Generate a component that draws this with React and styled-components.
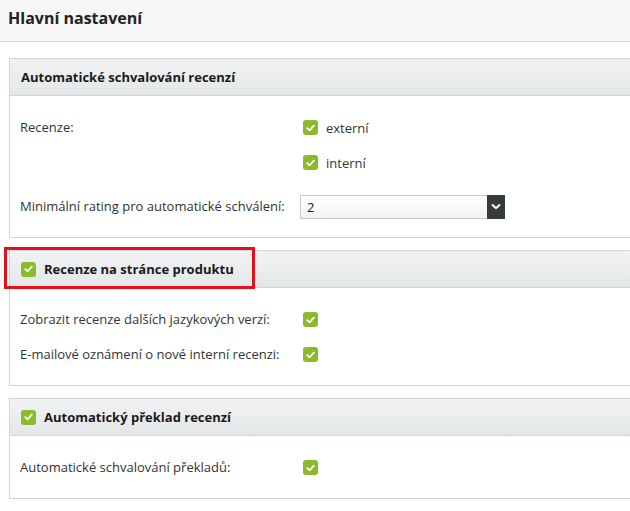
import React from "react";
import styled, { createGlobalStyle } from "styled-components";

const GlobalStyle = createGlobalStyle`
  html, body {
    margin: 0;
    padding: 0;
    background: #fff;
    font-family: "Open Sans", "Noto Sans", sans-serif;
    color: #333;
    overflow: hidden;
  }
`;

const Page = styled.div`
  width: 630px;
  height: 511px;
  overflow: hidden;
`;

const TitleBar = styled.div`
  height: 42px;
  display: flex;
  align-items: center;
  padding-left: 8px;
  background: #f6f6f6;
  border-bottom: 1px solid #d9d9d9;
  box-sizing: border-box;
  h1 {
    margin: 0;
    font-size: 16px;
    font-weight: 700;
    color: #222;
    margin-top: -5px;
  }
`;

const Content = styled.div`
  padding: 16px 0 0 9px;
  display: flex;
  flex-direction: column;
  gap: 12px;
`;

const Panel = styled.section`
  position: relative;
  border: 1px solid #d4d4d4;
  border-right: none;
  width: 640px;
`;

const PanelHeader = styled.div`
  height: 36px;
  display: flex;
  align-items: center;
  gap: 8px;
  padding-left: 11px;
  background: linear-gradient(#f1f2f3, #e4e7e8);
  border-bottom: 1px solid #d4d4d4;
  font-size: 13px;
  font-weight: 700;
  color: #1a1a1a;
`;

const PanelBody = styled.div`
  padding: 14px 11px 13px 10px;
  display: flex;
  flex-direction: column;
`;

const Row = styled.div`
  display: flex;
  align-items: ${(p) => (p.$top ? "flex-start" : "center")};
  min-height: 35px;
  margin-top: ${(p) => p.$gap || 0}px;
  font-size: 13px;
`;

const Label = styled.div`
  width: 280px;
  flex: none;
  line-height: 35px;
`;

const Options = styled.div`
  display: flex;
  flex-direction: column;
`;

const Option = styled.label`
  display: flex;
  align-items: center;
  gap: 8px;
  height: 35px;
  padding-left: 3px;
`;

const Box = styled.span`
  width: 15px;
  height: 15px;
  border-radius: 3px;
  background: #8cba2c;
  display: inline-flex;
  align-items: center;
  justify-content: center;
  flex: none;
  margin-left: ${(p) => p.$offset || 0}px;
`;

const Select = styled.div`
  width: 205px;
  height: 24px;
  box-sizing: border-box;
  display: flex;
  border: 1px solid #c9c9c9;
  background: linear-gradient(#ffffff, #f2f2f2);
  span {
    flex: 1;
    padding-left: 6px;
    line-height: 22px;
    color: #222;
  }
`;

const SelectButton = styled.div`
  width: 18px;
  margin: -1px -1px -1px 0;
  background: #353b3c;
  display: flex;
  align-items: center;
  justify-content: center;
`;

const Highlight = styled.div`
  position: absolute;
  left: -6px;
  top: -4px;
  width: 251px;
  height: 42px;
  border: 3px solid #e3101a;
  box-sizing: border-box;
  pointer-events: none;
`;

function Check({ offset }) {
  return (
    <Box $offset={offset}>
      <svg width="9" height="8" viewBox="0 0 9 8">
        <path
          d="M1.2 4.2 L3.5 6.3 L7.8 1.6"
          fill="none"
          stroke="#fff"
          strokeWidth="1.8"
          strokeLinecap="round"
          strokeLinejoin="round"
        />
      </svg>
    </Box>
  );
}

export default function App() {
  return (
    <Page>
      <GlobalStyle />
      <TitleBar>
        <h1>Hlavní nastavení</h1>
      </TitleBar>
      <Content>
        <Panel>
          <PanelHeader>Automatické schvalování recenzí</PanelHeader>
          <PanelBody>
            <Row $top>
              <Label>Recenze:</Label>
              <Options>
                <Option>
                  <Check />
                  externí
                </Option>
                <Option>
                  <Check />
                  interní
                </Option>
              </Options>
            </Row>
            <Row $gap={9}>
              <Label>Minimální rating pro automatické schválení:</Label>
              <Select>
                <span>2</span>
                <SelectButton>
                  <svg width="10" height="7" viewBox="0 0 10 7">
                    <path d="M1 1.5 L5 5.2 L9 1.5" fill="none" stroke="#fff" strokeWidth="2" />
                  </svg>
                </SelectButton>
              </Select>
            </Row>
          </PanelBody>
        </Panel>

        <Panel>
          <PanelHeader>
            <Check />
            Recenze na stránce produktu
          </PanelHeader>
          <Highlight />
          <PanelBody>
            <Row>
              <Label>Zobrazit recenze dalších jazykových verzí:</Label>
              <Check offset={3} />
            </Row>
            <Row>
              <Label>E-mailové oznámení o nové interní recenzi:</Label>
              <Check offset={3} />
            </Row>
          </PanelBody>
        </Panel>

        <Panel>
          <PanelHeader>
            <Check />
            Automatický překlad recenzí
          </PanelHeader>
          <PanelBody>
            <Row>
              <Label>Automatické schvalování překladů:</Label>
              <Check offset={3} />
            </Row>
          </PanelBody>
        </Panel>
      </Content>
    </Page>
  );
}
